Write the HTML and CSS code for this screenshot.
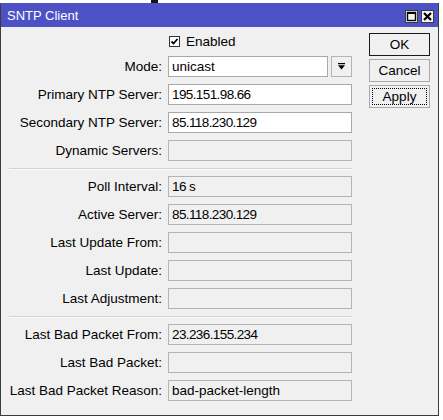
FILE: index.html
```html
<!DOCTYPE html>
<html>
<head>
<meta charset="utf-8">
<title>SNTP Client</title>
<link rel="stylesheet" href="styles.css">
</head>
<body>
<div class="strip"><span class="blob"></span></div>
<div class="window">
  <div class="titlebar">
    <span class="title">SNTP Client</span>
    <div class="tb-buttons">
      <span class="tb-btn"><svg width="11" height="11" viewBox="0 0 11 11"><rect x="1.5" y="1.5" width="8" height="8" fill="none" stroke="#000" stroke-width="1.4"/><rect x="1" y="1" width="9" height="2" fill="#000"/></svg></span>
      <span class="tb-btn"><svg width="11" height="11" viewBox="0 0 11 11"><path d="M2 2 L9 9 M9 2 L2 9" stroke="#000" stroke-width="2.2"/></svg></span>
    </div>
  </div>
  <div class="content">
    <div class="form">
      <div class="row check-row">
        <span class="label"></span>
        <span class="checkbox"><svg width="9" height="9" viewBox="0 0 9 9"><path d="M1.5 4.5 L3.5 6.5 L7.5 2" fill="none" stroke="#000" stroke-width="1.8"/></svg></span>
        <span class="check-text">Enabled</span>
      </div>
      <div class="row">
        <span class="label">Mode:</span>
        <span class="field edit mode">unicast</span>
        <span class="drop"><svg width="7" height="7" viewBox="0 0 7 7"><rect x="0" y="0" width="7" height="1.2" fill="#000"/><path d="M0 2.2 H7 L3.5 6.5 Z" fill="#000"/></svg></span>
      </div>
      <div class="row">
        <span class="label">Primary NTP Server:</span>
        <span class="field edit num">195.151.98.66</span>
      </div>
      <div class="row">
        <span class="label">Secondary NTP Server:</span>
        <span class="field edit num">85.118.230.129</span>
      </div>
      <div class="row">
        <span class="label">Dynamic Servers:</span>
        <span class="field"></span>
      </div>
      <div class="sep"></div>
      <div class="row">
        <span class="label">Poll Interval:</span>
        <span class="field num">16 s</span>
      </div>
      <div class="row">
        <span class="label">Active Server:</span>
        <span class="field num">85.118.230.129</span>
      </div>
      <div class="row">
        <span class="label">Last Update From:</span>
        <span class="field"></span>
      </div>
      <div class="row">
        <span class="label">Last Update:</span>
        <span class="field"></span>
      </div>
      <div class="row">
        <span class="label">Last Adjustment:</span>
        <span class="field"></span>
      </div>
      <div class="sep"></div>
      <div class="row">
        <span class="label">Last Bad Packet From:</span>
        <span class="field num">23.236.155.234</span>
      </div>
      <div class="row">
        <span class="label">Last Bad Packet:</span>
        <span class="field"></span>
      </div>
      <div class="row">
        <span class="label">Last Bad Packet Reason:</span>
        <span class="field">bad-packet-length</span>
      </div>
    </div>
    <div class="buttons">
      <button class="btn default">OK</button>
      <button class="btn">Cancel</button>
      <button class="btn focus">Apply</button>
    </div>
  </div>
</div>
</body>
</html>
```
FILE: styles.css
```css
html, body {
  margin: 0;
  padding: 0;
  background: #ffffff;
}
body {
  font-family: "Liberation Sans", Arial, sans-serif;
  font-size: 13.5px;
  color: #000;
}
.strip {
  height: 3px;
  display: flex;
}
.blob {
  width: 7px;
  height: 3px;
  margin-left: 151px;
  background: #111;
}
.window {
  width: 439px;
  height: 413px;
  box-sizing: border-box;
  border: 1px solid #3c3c3c;
  border-top-color: #4c51c6;
  background: #f0f0f0;
  display: flex;
  flex-direction: column;
}
.titlebar {
  height: 23px;
  flex: none;
  background: #4c51c6;
  display: flex;
  align-items: center;
  justify-content: space-between;
  padding: 0 4px 0 6px;
}
.title {
  color: #fff;
  font-size: 13px;
}
.tb-buttons {
  display: flex;
  gap: 3px;
  margin-top: 1px;
}
.tb-btn {
  width: 13px;
  height: 13px;
  box-sizing: border-box;
  border: 1px solid #3a3a3a;
  background: #f4f4f4;
  display: flex;
  align-items: center;
  justify-content: center;
}
.tb-btn svg { display: block; }
.content {
  display: flex;
}
.form {
  width: 351px;
  padding-top: 7px;
}
.row {
  display: flex;
  align-items: center;
  height: 21px;
  margin-bottom: 7px;
}
.check-row {
  height: 15px;
}
.label {
  width: 161px;
  flex: none;
  margin-right: 6px;
  text-align: right;
  white-space: nowrap;
}
.checkbox {
  width: 11px;
  height: 11px;
  box-sizing: border-box;
  border: 1px solid #333;
  background: #fff;
  display: flex;
  align-items: center;
  justify-content: center;
  margin-left: 1px;
}
.checkbox svg { display: block; }
.check-text {
  margin-left: 6px;
}
.field {
  box-sizing: border-box;
  width: 184px;
  height: 21px;
  border: 1px solid #b4b4b4;
  background: #f0f0f0;
  padding: 0 3px;
  line-height: 19px;
  white-space: nowrap;
}
.field.edit {
  background: #fff;
  border-color: #a8a8a8;
}
.field.mode {
  width: 162px;
}
.num {
  letter-spacing: -0.6px;
}
.drop {
  box-sizing: border-box;
  width: 21px;
  height: 21px;
  margin-left: 3px;
  border: 1px solid #b4b4b4;
  background: #f0f0f0;
  display: flex;
  align-items: center;
  justify-content: center;
}
.drop svg { display: block; }
.sep {
  width: 343px;
  margin: 2px 0 6px 8px;
  border-top: 1px solid #d4d4d4;
  border-bottom: 1px solid #fafafa;
}
.buttons {
  margin-left: 17px;
  padding-top: 6px;
  display: flex;
  flex-direction: column;
  gap: 3px;
}
.btn {
  width: 61px;
  height: 23px;
  box-sizing: border-box;
  border: 1px solid #a9a9a9;
  background: #f0f0f0;
  font-family: "Liberation Sans", Arial, sans-serif;
  font-size: 13.5px;
  color: #000;
  padding: 0;
  margin: 0;
}
.btn.default {
  border-color: #1a1a1a;
}
.btn.focus {
  outline: 1px dotted #000;
  outline-offset: -4px;
}
```
